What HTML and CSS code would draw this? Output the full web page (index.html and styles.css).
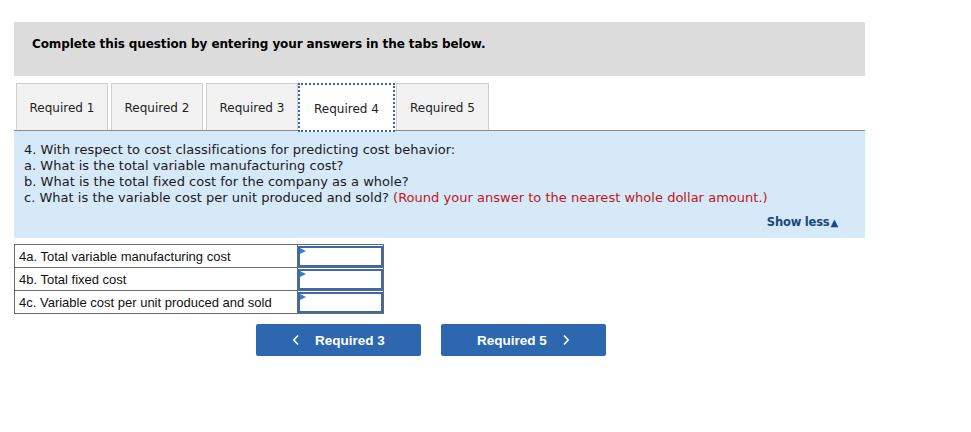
FILE: index.html
```html
<!DOCTYPE html>
<html>
<head>
<meta charset="utf-8">
<link rel="stylesheet" href="styles.css">
</head>
<body>
<div class="wrap">
  <div class="header">Complete this question by entering your answers in the tabs below.</div>
  <div class="tabs">
    <div class="tab">Required 1</div>
    <div class="tab">Required 2</div>
    <div class="tab">Required 3</div>
    <div class="tab active">Required 4</div>
    <div class="tab">Required 5</div>
  </div>
  <div class="panel">
    <div class="q">4. With respect to cost classifications for predicting cost behavior:</div>
    <div class="q">a. What is the total variable manufacturing cost?</div>
    <div class="q">b. What is the total fixed cost for the company as a whole?</div>
    <div class="q">c. What is the variable cost per unit produced and sold? <span class="red">(Round your answer to the nearest whole dollar amount.)</span></div>
    <div class="showless">Show less<span class="tri">&#9650;</span></div>
  </div>
  <table class="ans">
    <tr><td class="lbl">4a. Total variable manufacturing cost</td><td class="inp"><div class="box"><span class="mark"></span></div></td></tr>
    <tr><td class="lbl">4b. Total fixed cost</td><td class="inp"><div class="box"><span class="mark"></span></div></td></tr>
    <tr><td class="lbl">4c. Variable cost per unit produced and sold</td><td class="inp"><div class="box"><span class="mark"></span></div></td></tr>
  </table>
  <div class="nav">
    <div class="btn"><svg class="chev" width="8" height="12" viewBox="0 0 8 12"><polyline points="6,1.5 1.8,6 6,10.5" fill="none" stroke="#fff" stroke-width="1.6"/></svg>Required 3</div>
    <div class="btn">Required 5<svg class="chev right" width="8" height="12" viewBox="0 0 8 12"><polyline points="2,1.5 6.2,6 2,10.5" fill="none" stroke="#fff" stroke-width="1.6"/></svg></div>
  </div>
</div>
</body>
</html>
```

FILE: styles.css
```css
* { box-sizing: border-box; }
html, body { margin: 0; padding: 0; background: #fff; }
body { font-family: "DejaVu Sans", Verdana, sans-serif; color: #000; }
.wrap { padding: 22px 0 0 14px; width: 865px; }
.header {
  background: #dcdcdc;
  height: 54px;
  padding: 15px 0 0 18px;
  font-weight: bold;
  font-size: 12px;
  letter-spacing: -0.1px;
}
.tabs {
  display: flex;
  margin-top: 7px;
  padding-left: 2px;
  height: 48px;
  border-bottom: 1px solid #8c8c8c;
  gap: 3px;
}
.tab {
  width: 92px;
  height: 47px;
  background: #f2f2f2;
  border: 1px solid #cfcfcf;
  border-bottom: none;
  display: flex;
  align-items: center;
  justify-content: center;
  padding-top: 2px;
  font-size: 12px;
  color: #222;
}
.tab:last-child { width: 93px; margin-left: 1px; }
.tab.active {
  background: #fff;
  border: 2px dotted #3366bb;
  width: 97px;
  height: 49px;
  margin: 0 -3px 0 -3px;
  position: relative;
  z-index: 1;
}
.panel {
  background: #d5e9f8;
  height: 107px;
  padding: 11px 10px 0 10px;
  position: relative;
  font-size: 13px;
  letter-spacing: 0.02px;
  color: #1a1a1a;
}
.q { line-height: 16px; height: 16px; white-space: nowrap; }
.red { color: #c0161c; }
.showless {
  position: absolute;
  right: 27px;
  top: 84px;
  font-size: 11.5px;
  font-weight: bold;
  letter-spacing: -0.2px;
  color: #1a4680;
}
.tri { font-size: 10px; margin-left: 1px; }
.ans {
  margin-top: 6px;
  border-collapse: collapse;
  font-family: "Liberation Sans", Arial, sans-serif;
  font-size: 13px;
}
.ans td {
  border: 1px solid #6a6a6a;
  height: 23px;
  padding: 0;
}
.lbl { width: 283px; padding-left: 4px !important; color: #111; }
.inp { width: 86px; }
.box {
  height: 21px;
  border: 2px solid #3a69ad;
  position: relative;
  margin: 0;
}
.mark {
  position: absolute;
  left: 0;
  top: 0;
  width: 0; height: 0;
  border-top: 3px solid transparent;
  border-bottom: 3px solid transparent;
  border-left: 6px solid #3a7bd5;
}
.nav {
  display: flex;
  gap: 20px;
  margin: 10px 0 0 242px;
}
.btn {
  width: 165px;
  height: 32px;
  background: #2c67b0;
  border-radius: 2px;
  color: #fff;
  font-family: "Liberation Sans", Arial, sans-serif;
  font-weight: bold;
  font-size: 13.5px;
  display: flex;
  align-items: center;
  justify-content: center;
}
.chev { margin-right: 15px; }
.chev.right { margin-right: 0; margin-left: 15px; }
```
